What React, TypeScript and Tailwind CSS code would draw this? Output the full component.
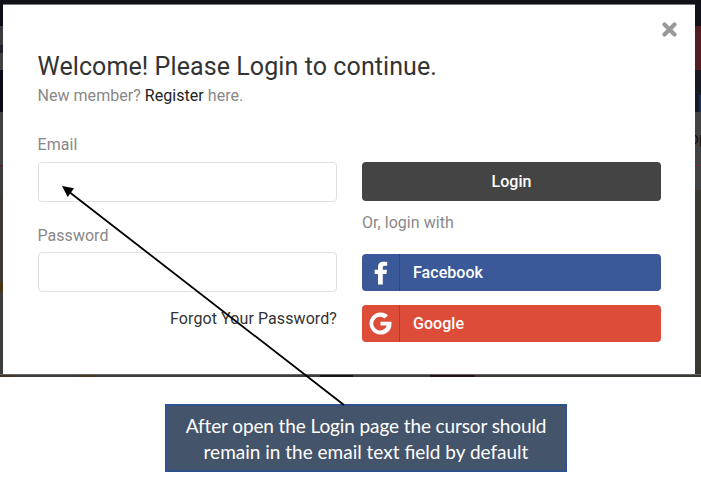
import React from "react";

type Segment = { size: string; color: string };

const leftEdge: Segment[] = [
  { size: "h-[22px]", color: "bg-[#0d0e16]" },
  { size: "h-[19px]", color: "bg-[#3b3b3d]" },
  { size: "h-[8px]", color: "bg-[#20202c]" },
  { size: "h-[17px]", color: "bg-[#414141]" },
  { size: "h-[42px]", color: "bg-[#0a0a18]" },
  { size: "h-[53px]", color: "bg-[#424242]" },
  { size: "h-px", color: "bg-[#63191d]" },
  { size: "h-[28px]", color: "bg-[#3d3d3d]" },
  { size: "h-[88px]", color: "bg-[#3c3a33]" },
  { size: "h-[10px]", color: "bg-[#493514]" },
  { size: "grow", color: "bg-[#3d3d3d]" },
];

const rightEdge: Segment[] = [
  { size: "h-[22px]", color: "bg-[#10131b]" },
  { size: "h-[44px]", color: "bg-[#531c20]" },
  { size: "h-[25px]", color: "bg-[#161a24]" },
  { size: "h-[17px]", color: "bg-[#161a24] border-r-2 border-[#1b2f5c]" },
  { size: "h-[53px]", color: "bg-[#424344]" },
  { size: "h-px", color: "bg-[#7a2a35]" },
  { size: "h-[24px]", color: "bg-[#424344]" },
  { size: "grow", color: "bg-[#3c372e]" },
];

function Edge({ segments, width }: { segments: Segment[]; width: string }) {
  return (
    <div className={`flex shrink-0 flex-col ${width}`}>
      {segments.map((s, i) => (
        <div key={i} className={`${s.size} ${s.color}`} />
      ))}
    </div>
  );
}

function SocialButton({ label, color, children }: { label: string; color: string; children: React.ReactNode }) {
  return (
    <button className={`flex h-[37px] w-full items-center overflow-hidden rounded-[4px] text-left text-white ${color}`}>
      <span className="flex h-full w-[38px] shrink-0 items-center justify-center border-r border-black/20">{children}</span>
      <span className="pl-[13px] font-medium">{label}</span>
    </button>
  );
}

export default function App() {
  return (
    <main className="relative h-[477px] w-[701px] overflow-hidden bg-white font-['Roboto',sans-serif] text-[16px] leading-[20px] tracking-[0.04px] text-[#888]">
      <div className="flex h-[377px] flex-col">
        <div className="h-[4px] shrink-0 bg-[#101218]" />
        <div className="flex h-[370px] shrink-0">
          <Edge segments={leftEdge} width="w-[3px]" />
          <section className="w-[692px] border-t border-[#77797b] bg-white pl-[34.5px] pr-[34px]">
            <div className="flex h-[44px] justify-end pt-[17px]">
              <button aria-label="Close" className="mr-[-16px] h-[15px] w-[15px]">
                <svg viewBox="0 0 15 15" className="h-[15px] w-[15px]">
                  <path d="M2.5 2.5 12.5 12.5M12.5 2.5 2.5 12.5" stroke="#999" strokeWidth="4.2" strokeLinecap="round" />
                </svg>
              </button>
            </div>
            <h1 className="h-[37px] whitespace-nowrap text-[25px] leading-[36px] tracking-[0.09px] text-[#333]">
              Welcome! Please Login to continue.
            </h1>
            <p className="h-[20px] whitespace-nowrap">
              New member? <a className="text-[#222]">Register</a> here.
            </p>
            <div className="flex gap-[25px] pt-[28px]">
              <form className="flex w-[299.5px] shrink-0 flex-col">
                <label className="h-[28px] pt-px">Email</label>
                <input className="h-[40px] w-full rounded-[4px] border border-[#e0e0e0] bg-white outline-none" />
                <label className="mt-[24px] h-[26px]">Password</label>
                <input className="h-[40px] w-full rounded-[4px] border border-[#e0e0e0] bg-white outline-none" />
                <a className="mt-[17px] text-right tracking-[0.09px] text-[#333]">Forgot Your Password?</a>
              </form>
              <div className="flex w-[299px] shrink-0 flex-col pt-[28px]">
                <button className="h-[39px] shrink-0 rounded-[4px] bg-[#444] font-medium text-white">Login</button>
                <p className="mt-[12px] h-[41px]">Or, login with</p>
                <div className="flex flex-col gap-[14px]">
                  <SocialButton label="Facebook" color="bg-[#3b5998]">
                    <svg viewBox="0 0 14 24" className="h-[24px] w-[14px]">
                      <path d="M4 23.5V13H.7V8.8H4V5.6C4 2.3 6 .7 9 .7c1.5 0 2.8.1 4.2.3v3.8h-2.2c-1.8 0-2.2.8-2.2 2v2h4.2L12.4 13H8.8v10.5Z" fill="white" />
                    </svg>
                  </SocialButton>
                  <SocialButton label="Google" color="bg-[#dd4b39]">
                    <svg viewBox="0 0 24 24" className="h-[23px] w-[23px]">
                      <path d="M12 10.1h11.3c.2.7.2 1.4.2 2.1 0 6.7-4.6 11.3-11.4 11.3A11.5 11.5 0 1 1 19.8 3.5l-3.4 3.2A7.2 7.2 0 1 0 18.6 14H12Z" fill="white" />
                    </svg>
                  </SocialButton>
                </div>
              </div>
            </div>
          </section>
          <Edge segments={rightEdge} width="w-[6px]" />
        </div>
        <div className="flex h-[3px] shrink-0 border-t border-[#666]">
          <div className="w-[14px] bg-[#3d3421]" />
          <div className="w-[65px] bg-[#3c3c3c]" />
          <div className="w-[16px] bg-[#423620]" />
          <div className="w-[225px] bg-[#3c3c3c]" />
          <div className="w-[33px] bg-[#151517]" />
          <div className="w-[77px] bg-[#3c3c3e]" />
          <div className="w-[45px] bg-[#211519]" />
          <div className="w-[226px] bg-[#3b3832]" />
        </div>
      </div>
      <aside className="ml-[165px] mt-[27px] flex h-[68px] w-[402px] flex-col items-center border-2 border-[#2f528f] bg-[#44546a] pt-[7px] font-['Lato',sans-serif] text-[19px] leading-[26px] text-white">
        <span className="whitespace-nowrap tracking-[-0.11px]">After open the Login page the cursor should</span>
        <span className="whitespace-nowrap tracking-[0px]">remain in the email text field by default</span>
      </aside>
      <div className="absolute left-[695px] top-[129px] flex h-[22px] w-[6px] justify-end overflow-hidden text-[16px] text-[#111]">
        <span className="mr-[-7px]">op</span>
      </div>
      <svg className="pointer-events-none absolute left-0 top-0" width="701" height="477" viewBox="0 0 701 477">
        <path d="M68 191 344 405" stroke="black" strokeWidth="1.8" />
        <path d="M62 186 74 188.3 67.7 197Z" fill="black" />
      </svg>
    </main>
  );
}
